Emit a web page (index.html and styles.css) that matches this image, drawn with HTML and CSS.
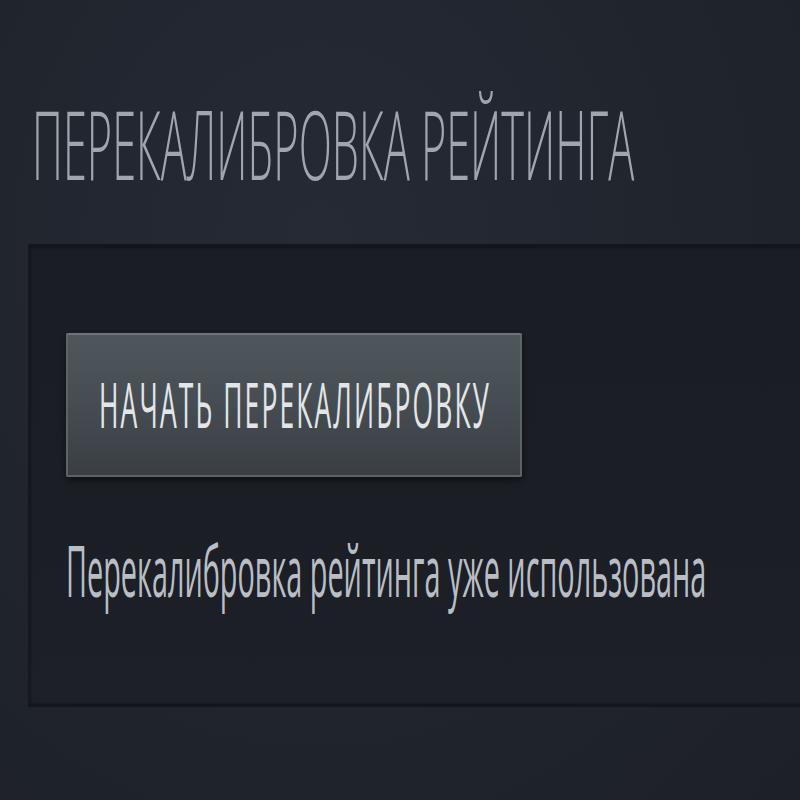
FILE: index.html
```html
<!DOCTYPE html>
<html lang="ru">
<head>
    <meta charset="UTF-8">
    <meta name="viewport" content="width=device-width, initial-scale=1.0">
    <title>Перекалибровка рейтинга</title>
    <link rel="stylesheet" href="styles.css">
</head>
<body>
    <div class="page">
        <!-- Section title -->
        <h1 class="section-title"><span class="squeeze title-text">ПЕРЕКАЛИБРОВКА РЕЙТИНГА</span></h1>

        <!-- Recalibration panel -->
        <div class="panel">
            <button class="recal-button" disabled>
                <span class="squeeze button-text">НАЧАТЬ ПЕРЕКАЛИБРОВКУ</span>
            </button>
            <p class="status"><span class="squeeze status-text">Перекалибровка рейтинга уже использована</span></p>
        </div>
    </div>
</body>
</html>
```

FILE: styles.css
```css
html, body {
    margin: 0;
    padding: 0;
    height: 100%;
    overflow: hidden;
}

body {
    background: radial-gradient(ellipse at 40% 30%, #252a35 0%, #1f232b 70%, #1d2028 100%);
    font-family: "Open Sans", "DejaVu Sans", sans-serif;
    color: #9aa1a8;
}

.page {
    padding: 95px 0 0 32px;
    overflow: hidden;
}

/* narrow glyphs: the face is squeezed horizontally */
.squeeze {
    display: inline-block;
    white-space: nowrap;
    transform-origin: left center;
}

.section-title {
    margin: 0;
    font-size: 96px;
    line-height: 96px;
    font-weight: 300;
    height: 96px;
    color: #a0a6ad;
}

.title-text {
    transform: scaleX(0.451);
}

.panel {
    margin: 53px -40px 0 -4px;
    box-sizing: border-box;
    height: 463px;
    padding: 87px 0 0 36px;
    background: linear-gradient(180deg, #1a1d24 0%, #1b1e25 60%, #1d2028 100%);
    border: 2px solid #13161b;
    border-left-color: #15181d;
    box-shadow: inset 0 2px 3px rgba(0, 0, 0, 0.35), inset 0 -2px 2px rgba(0, 0, 0, 0.3);
}

.recal-button {
    display: flex;
    align-items: center;
    width: 456px;
    height: 144px;
    padding: 0 0 0 31px;
    margin: 0;
    box-sizing: border-box;
    overflow: hidden;
    background: linear-gradient(180deg, #50575c 0%, #474e53 45%, #3e4449 80%, #393e43 100%);
    border: 2px solid #5d6368;
    border-top-color: #6d7378;
    border-radius: 2px;
    box-shadow: 0 3px 6px rgba(0, 0, 0, 0.45);
    font-family: inherit;
    cursor: default;
}

.button-text {
    font-size: 63px;
    line-height: 63px;
    font-weight: 500;
    letter-spacing: 5px;
    color: #e2e6e8;
    transform: scaleX(0.42);
    margin-top: -4px;
}

.status {
    margin: 57px 0 0;
    font-size: 71px;
    line-height: 71px;
    font-weight: 500;
    color: #b8bec4;
    height: 71px;
}

.status-text {
    transform: scaleX(0.406);
}
```
